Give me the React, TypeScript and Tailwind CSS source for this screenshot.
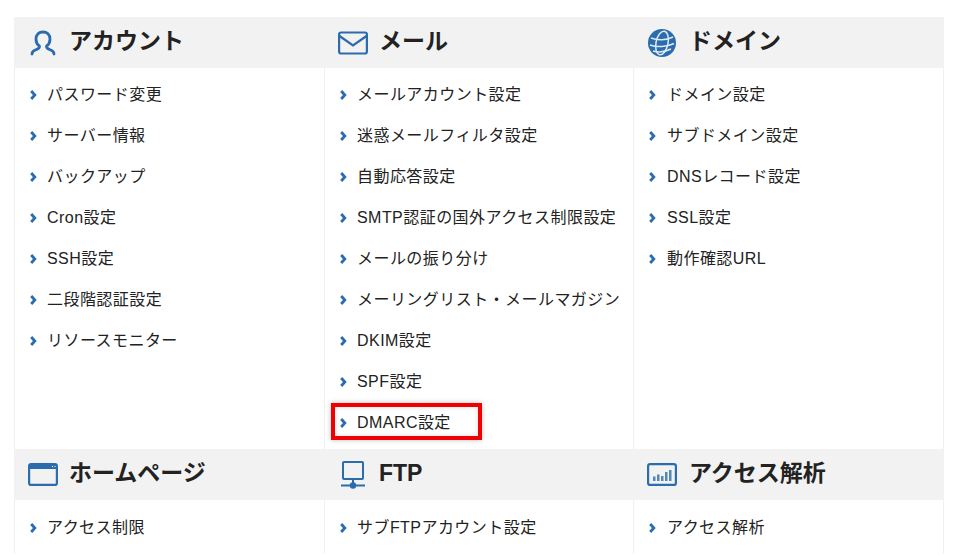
import React from "react";

const BLUE = "#2b6cad";

const UserIcon = () => (
  <svg width="26" height="26" viewBox="0 0 26 26" fill="none" stroke={BLUE} strokeWidth="2.800" strokeLinecap="round" strokeLinejoin="round">
    <path d="M2 24c0-3 2-3.500 4.500-4.500 2.500-1 3-2 3-3.300-2-1.500-3.500-3.500-3.500-7C6 4.500 9 2 13 2s7 2.500 7 7.200c0 3.500-1.500 5.500-3.500 7 0 1.300.5 2.300 3 3.300 2.500 1 4.500 1.500 4.500 4.500" />
  </svg>
);

const MailIcon = () => (
  <svg width="30" height="24" viewBox="0 0 30 24" fill="none" stroke={BLUE} strokeWidth="2.200">
    <rect x="1.100" y="1.500" width="27.800" height="21" rx="2" />
    <path d="M1.500 5 15 14.500 28.500 5" />
  </svg>
);

const GlobeIcon = () => (
  <svg width="28" height="28" viewBox="0 0 28 28" fill="none">
    <circle cx="14" cy="14" r="14" fill={BLUE} />
    <g stroke="#fff" strokeWidth="1.500" opacity="0.85">
      <ellipse cx="14" cy="14" rx="6" ry="12" transform="rotate(12 14 14)" />
      <path d="M3 9c6 2.500 15 2.500 22-1M2 16c7 2.500 17 2 24-1.500M5 22c5 1.500 12 1 18-2" />
    </g>
  </svg>
);

const WindowIcon = () => (
  <svg width="30" height="23" viewBox="0 0 30 23" fill="none">
    <rect x="1.100" y="1.100" width="27.800" height="20.800" rx="2" stroke={BLUE} strokeWidth="2.200" />
    <path d="M1 3a2 2 0 0 1 2-2h24a2 2 0 0 1 2 2v3H1z" fill={BLUE} />
    <path d="M24 3.500h1M26.500 3.500h1" stroke="#fff" strokeWidth="1" />
  </svg>
);

const FtpIcon = () => (
  <svg width="24" height="28" viewBox="0 0 24 28" fill="none" stroke={BLUE} strokeWidth="2">
    <rect x="2" y="1" width="20" height="17" rx="1" />
    <path d="M12 18v6M0 24.500h24" />
    <circle cx="12" cy="24.500" r="2.200" fill={BLUE} />
  </svg>
);

const ChartIcon = () => (
  <svg width="30" height="23" viewBox="0 0 30 23" fill="none">
    <rect x="1.100" y="1.100" width="27.800" height="20.800" rx="2" stroke={BLUE} strokeWidth="2.200" />
    <path d="M6 13.500h2.500V18H6zM10 11.500h2.500V18H10zM14 13h2.500v5H14zM18 9h2.500v9H18zM22 7h2.500v11H22z" fill={BLUE} opacity="0.8" />
  </svg>
);

const Arrow = () => (
  <svg width="7" height="10" viewBox="0 0 7 10" className="shrink-0" fill="none" stroke={BLUE} strokeWidth="2.800">
    <path d="M1.200 1 4.800 5 1.200 9" />
  </svg>
);

interface Section {
  title: string;
  icon: React.ReactNode;
  items: string[];
}

const top: Section[] = [
  {
    title: "アカウント",
    icon: <UserIcon />,
    items: ["パスワード変更", "サーバー情報", "バックアップ", "Cron設定", "SSH設定", "二段階認証設定", "リソースモニター"],
  },
  {
    title: "メール",
    icon: <MailIcon />,
    items: [
      "メールアカウント設定",
      "迷惑メールフィルタ設定",
      "自動応答設定",
      "SMTP認証の国外アクセス制限設定",
      "メールの振り分け",
      "メーリングリスト・メールマガジン",
      "DKIM設定",
      "SPF設定",
      "DMARC設定",
    ],
  },
  {
    title: "ドメイン",
    icon: <GlobeIcon />,
    items: ["ドメイン設定", "サブドメイン設定", "DNSレコード設定", "SSL設定", "動作確認URL"],
  },
];

const bottom: Section[] = [
  { title: "ホームページ", icon: <WindowIcon />, items: ["アクセス制限"] },
  { title: "FTP", icon: <FtpIcon />, items: ["サブFTPアカウント設定"] },
  { title: "アクセス解析", icon: <ChartIcon />, items: ["アクセス解析"] },
];

const Panel: React.FC<{ section: Section; last: boolean; lower?: boolean }> = ({ section, last, lower }) => (
  <div className="flex flex-col">
    <div className="flex h-[51px] items-center bg-[#f2f2f2] pl-[14px]">
      <div className="flex w-[30px] shrink-0 items-center justify-center">{section.icon}</div>
      <h2 className={`mb-[2px] text-[23px] font-bold leading-none text-[#222] ${last ? "ml-3" : "ml-[11px]"}`}>{section.title}</h2>
    </div>
    <ul className={`flex-1 border-l border-[#f0f0f0] pb-[6px] ${lower ? "pt-[7px]" : "pt-[6px]"} ${last ? "border-r" : ""}`}>
      {section.items.map((item) => (
        <li key={item} className="relative flex h-[41px] items-center pl-[15px] text-base tracking-[0.45px] text-[#222]">
          <Arrow />
          <span className={last ? "ml-[11px]" : "ml-[10px]"}>{item}</span>
          {item === "DMARC設定" && (
            <div className="absolute left-[6px] top-[1px] h-[37px] w-[151px] border-[4px] border-[#f00000] shadow-[0_0_5px_rgba(0,0,0,0.25),inset_0_0_5px_rgba(0,0,0,0.15)]" />
          )}
        </li>
      ))}
    </ul>
  </div>
);

export default function App() {
  return (
    <div className="h-[556px] overflow-hidden bg-white pl-[14px] pt-[17px] font-['Liberation_Sans','Noto_Sans_CJK_JP',sans-serif]">
      <div className="grid w-[930px] grid-cols-[310px_309px_311px]">
        {top.map((s, i) => (
          <Panel key={s.title} section={s} last={i === 2} />
        ))}
        {bottom.map((s, i) => (
          <Panel key={s.title} section={s} last={i === 2} lower />
        ))}
      </div>
    </div>
  );
}
